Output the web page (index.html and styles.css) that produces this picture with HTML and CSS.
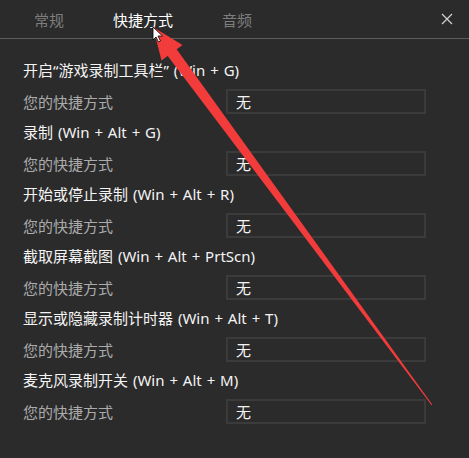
FILE: index.html
```html
<!DOCTYPE html>
<html lang="zh-CN">
<head>
    <meta charset="UTF-8">
    <title>快捷方式</title>
    <link rel="stylesheet" href="styles.css">
</head>
<body>
    <div class="panel">
        <div class="tabs">
            <div class="tab">常规</div>
            <div class="tab active">快捷方式</div>
            <div class="tab">音频</div>
            <div class="close">
                <svg width="12" height="12" viewBox="0 0 12 12">
                    <path d="M1 1 L11 11 M11 1 L1 11" stroke="#cfcfcf" stroke-width="1.3"/>
                </svg>
            </div>
        </div>

        <div class="list">
            <div class="group">
                <div class="title">开启“游戏录制工具栏” (Win + G)</div>
                <div class="row"><span class="label">您的快捷方式</span><div class="box">无</div></div>
            </div>
            <div class="group">
                <div class="title">录制 (Win + Alt + G)</div>
                <div class="row"><span class="label">您的快捷方式</span><div class="box">无</div></div>
            </div>
            <div class="group">
                <div class="title">开始或停止录制 (Win + Alt + R)</div>
                <div class="row"><span class="label">您的快捷方式</span><div class="box">无</div></div>
            </div>
            <div class="group">
                <div class="title">截取屏幕截图 (Win + Alt + PrtScn)</div>
                <div class="row"><span class="label">您的快捷方式</span><div class="box">无</div></div>
            </div>
            <div class="group">
                <div class="title">显示或隐藏录制计时器 (Win + Alt + T)</div>
                <div class="row"><span class="label">您的快捷方式</span><div class="box">无</div></div>
            </div>
            <div class="group">
                <div class="title">麦克风录制开关 (Win + Alt + M)</div>
                <div class="row"><span class="label">您的快捷方式</span><div class="box">无</div></div>
            </div>
        </div>
    </div>

    <!-- 红色箭头标注 -->
    <svg class="mark" width="469" height="458" viewBox="0 0 469 458">
        <polygon points="175.4,47.5 166.6,54.5 431.6,405.3 432.4,404.7" fill="#f23b3b"/>
        <polygon points="153,27 182.5,45 161.5,60.4" fill="#f23b3b"/>
        <path d="M153 27 L153 40 L156 37 L158.5 42 L160.5 41 L158 36 L162.5 36 Z" fill="#fff" stroke="#000" stroke-width="0.8"/>
    </svg>
</body>
</html>
```

FILE: styles.css
```css
body {
    margin: 0;
    background: #2b2b2b;
    font-family: "Noto Sans CJK SC", sans-serif;
    color: #f2f2f2;
}

.panel {
    width: 469px;
    height: 458px;
}

.tabs {
    display: flex;
    align-items: center;
    height: 39px;
    border-bottom: 1px solid #5c5c5c;
    padding-left: 34px;
    box-sizing: border-box;
}

.tab {
    font-size: 15px;
    color: #7d7d7d;
    margin-right: 49px;
}

.tab.active {
    color: #ffffff;
}

.close {
    margin-left: auto;
    margin-right: 16px;
    display: flex;
}

.list {
    padding: 16px 0 0 23px;
}

.group {
    display: flex;
    flex-direction: column;
}

.title {
    height: 31px;
    line-height: 31px;
    font-family: "Noto Sans", "Noto Sans CJK SC", sans-serif;
    font-size: 15px;
    word-spacing: 1px;
    color: #f4f4f4;
}

.row {
    display: grid;
    grid-template-columns: 203px 200px;
    align-items: center;
    height: 31px;
}

.label {
    font-size: 15px;
    color: #ababab;
}

.box {
    height: 25px;
    box-sizing: border-box;
    border: 2px solid #3b3b3b;
    padding-left: 8px;
    font-size: 15px;
    line-height: 21px;
    color: #f4f4f4;
}

.mark {
    position: absolute;
    top: 0;
    left: 0;
    pointer-events: none;
}
```
